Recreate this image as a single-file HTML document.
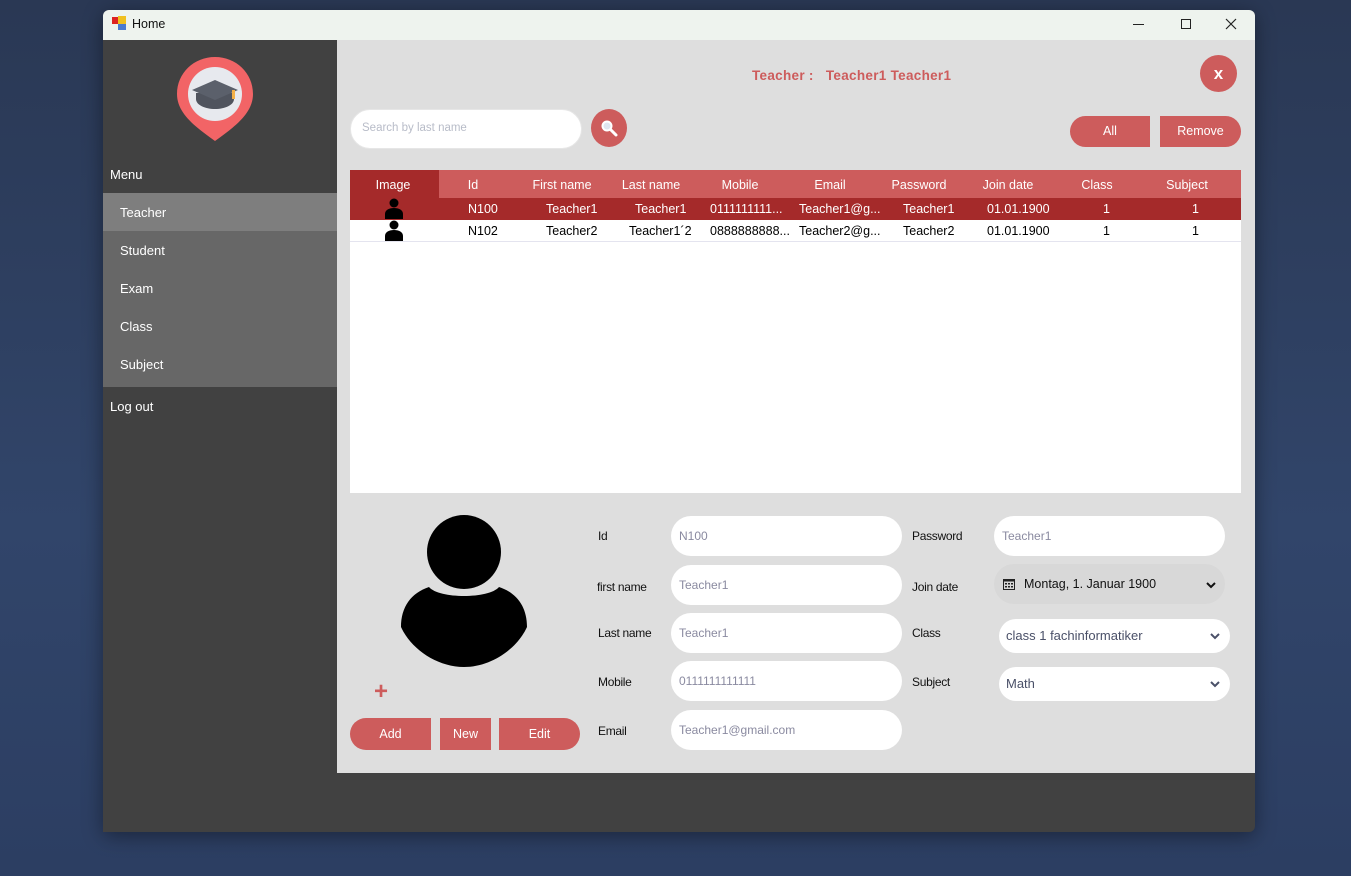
<!DOCTYPE html>
<html><head><meta charset="utf-8"><style>
*{margin:0;padding:0;box-sizing:border-box}
body{width:1351px;height:876px;background:linear-gradient(180deg,#2a3854,#31456a 60%,#2c3e62);font-family:"Liberation Sans",sans-serif;position:relative;overflow:hidden}
.a{position:absolute}
.win{left:103px;top:10px;width:1152px;height:822px;background:#414141;border-radius:6px;overflow:hidden;box-shadow:0 4px 20px rgba(0,0,0,.4)}
.t{font-size:13px;color:#fff;white-space:nowrap}
.hd{font-size:12.5px;color:#fff;top:178px;transform:translateX(-50%)}
.c{font-size:12.5px;white-space:nowrap}
.in{background:#fff;border-radius:20px;height:40px}
.lb{font-size:12px;color:#111;letter-spacing:-.3px}
.v{font-size:12px;color:#8a8aa0}
.btn{background:#cd5c5c;color:#fff;font-size:12.5px;text-align:center}
</style></head><body>
<div class="a win">
 <div class="a" style="left:0;top:0;width:1152px;height:30px;background:#eef3ee"></div>
 <div class="a" style="left:9px;top:7px;width:7px;height:7px;background:#d22"></div>
 <div class="a" style="left:15px;top:6px;width:8px;height:8px;background:#f0c020"></div>
 <div class="a" style="left:15px;top:14px;width:8px;height:6px;background:#4a7ad0"></div>
 <div class="a" style="left:29px;top:7px;font-size:12.5px;color:#111">Home</div>
 <div class="a" style="left:1030px;top:14px;width:11px;height:1px;background:#222"></div>
 <div class="a" style="left:1078px;top:9px;width:10px;height:10px;border:1px solid #222"></div>
 <svg class="a" style="left:1122px;top:8px" width="12" height="12"><path d="M1 1l10 10M11 1L1 11" stroke="#222" stroke-width="1.2"/></svg>
</div>
<!-- sidebar -->
<div class="a" style="left:103px;top:40px;width:234px;height:792px;background:#414141"></div>
<svg class="a" style="left:176px;top:56px" width="78" height="86" viewBox="0 0 78 86">
 <path d="M39 1C18 1 1 17 1 38c0 20 20 34 38 47C57 72 77 58 77 38 77 17 60 1 39 1z" fill="#f26466"/>
 <circle cx="39" cy="38" r="27" fill="#e7e9ee"/>
 <path d="M20 43v-6h38v6c0 6-9 10-19 10s-19-4-19-10z" fill="#50545e"/>
 <path d="M16 34l23-10 23 10-23 10z" fill="#5b606b"/>
 <rect x="56" y="34" width="3" height="9" fill="#f4b047"/>
</svg>
<div class="a t" style="left:110px;top:167px">Menu</div>
<div class="a" style="left:103px;top:193px;width:234px;height:194px;background:#676767"></div>
<div class="a" style="left:103px;top:193px;width:234px;height:38px;background:#7e7e7e"></div>
<div class="a t" style="left:120px;top:205px">Teacher</div>
<div class="a t" style="left:120px;top:243px">Student</div>
<div class="a t" style="left:120px;top:281px">Exam</div>
<div class="a t" style="left:120px;top:319px">Class</div>
<div class="a t" style="left:120px;top:357px">Subject</div>
<div class="a t" style="left:110px;top:399px">Log out</div>
<!-- main -->
<div class="a" style="left:337px;top:40px;width:918px;height:733px;background:#dedede"></div>
<div class="a" style="left:752px;top:68px;font-size:13.5px;font-weight:bold;color:#cd5c5c;letter-spacing:.3px">Teacher :&nbsp;&nbsp; Teacher1 Teacher1</div>
<div class="a" style="left:1200px;top:55px;width:37px;height:37px;border-radius:50%;background:#cd5c5c;color:#fff;font-weight:bold;font-size:17px;text-align:center;line-height:37px">x</div>
<div class="a in" style="left:350px;top:109px;width:232px;height:40px;border:1px solid #e6e6e6"></div>
<div class="a" style="left:362px;top:122px;font-size:11.5px;color:#b8bcc8">Search by last name</div>
<div class="a" style="left:591px;top:109px;width:36px;height:38px;border-radius:50%;background:#cd5c5c"></div>
<svg class="a" style="left:599px;top:118px" width="20" height="20"><circle cx="8" cy="8" r="5.5" fill="#fff"/><circle cx="8" cy="8" r="3.5" fill="#dfe6f0"/><path d="M12 12l5 5" stroke="#fff" stroke-width="3" stroke-linecap="round"/></svg>
<div class="a btn" style="left:1070px;top:116px;width:80px;height:31px;line-height:31px;border-radius:16px 0 0 16px">All</div>
<div class="a btn" style="left:1160px;top:116px;width:81px;height:31px;line-height:31px;border-radius:0 16px 16px 0">Remove</div>
<!-- table -->
<div class="a" style="left:350px;top:170px;width:891px;height:323px;background:#fff"></div>
<div class="a" style="left:350px;top:170px;width:891px;height:28px;background:#cd5c5c"></div>
<div class="a" style="left:350px;top:170px;width:89px;height:28px;background:#a52a2a"></div>
<div class="a" style="left:350px;top:198px;width:891px;height:22px;background:#a52a2a"></div>
<div class="a" style="left:350px;top:241px;width:891px;height:1px;background:#e4e4ef"></div>
<div class="a hd" style="left:393px">Image</div><div class="a hd" style="left:473px">Id</div><div class="a hd" style="left:562px">First name</div><div class="a hd" style="left:651px">Last name</div><div class="a hd" style="left:740px">Mobile</div><div class="a hd" style="left:830px">Email</div><div class="a hd" style="left:919px">Password</div><div class="a hd" style="left:1008px">Join date</div><div class="a hd" style="left:1097px">Class</div><div class="a hd" style="left:1187px">Subject</div>
<svg class="a" style="left:384px;top:198px" width="20" height="21"><circle cx="10" cy="5" r="4.5"/><path d="M1 21v-5c0-4 4-6 9-6s9 2 9 6v5z"/></svg>
<svg class="a" style="left:384px;top:220px" width="20" height="21"><circle cx="10" cy="5" r="4.5"/><path d="M1 21v-5c0-4 4-6 9-6s9 2 9 6v5z"/></svg>
<div class="a c" style="top:202px;left:468px;color:#fff">N100</div>
<div class="a c" style="top:202px;left:546px;color:#fff">Teacher1</div>
<div class="a c" style="top:202px;left:635px;color:#fff">Teacher1</div>
<div class="a c" style="top:202px;left:710px;color:#fff">0111111111...</div>
<div class="a c" style="top:202px;left:799px;color:#fff">Teacher1@g...</div>
<div class="a c" style="top:202px;left:903px;color:#fff">Teacher1</div>
<div class="a c" style="top:202px;left:987px;color:#fff">01.01.1900</div>
<div class="a c" style="top:202px;left:1103px;color:#fff">1</div>
<div class="a c" style="top:202px;left:1192px;color:#fff">1</div>
<div class="a c" style="top:224px;left:468px">N102</div>
<div class="a c" style="top:224px;left:546px">Teacher2</div>
<div class="a c" style="top:224px;left:629px">Teacher1´2</div>
<div class="a c" style="top:224px;left:710px">0888888888...</div>
<div class="a c" style="top:224px;left:799px">Teacher2@g...</div>
<div class="a c" style="top:224px;left:903px">Teacher2</div>
<div class="a c" style="top:224px;left:987px">01.01.1900</div>
<div class="a c" style="top:224px;left:1103px">1</div>
<div class="a c" style="top:224px;left:1192px">1</div>
<!-- avatar -->
<svg class="a" style="left:400px;top:515px" width="130" height="155"><circle cx="64" cy="37" r="37"/><path d="M1 112c0-20 10-34 28-40 10 12 60 12 70 0 18 6 28 20 28 40-10 22-36 40-63 40S11 134 1 112z"/></svg>
<div class="a" style="left:374px;top:678px;font-size:24px;color:#cd5c5c;font-weight:bold">+</div>
<div class="a btn" style="left:350px;top:718px;width:81px;height:32px;line-height:32px;border-radius:16px 0 0 16px">Add</div>
<div class="a btn" style="left:440px;top:718px;width:51px;height:32px;line-height:32px">New</div>
<div class="a btn" style="left:499px;top:718px;width:81px;height:32px;line-height:32px;border-radius:0 16px 16px 0">Edit</div>
<!-- form -->
<div class="a lb" style="left:598px;top:529px">Id</div>
<div class="a lb" style="left:597px;top:580px">first name</div>
<div class="a lb" style="left:598px;top:626px">Last name</div>
<div class="a lb" style="left:598px;top:675px">Mobile</div>
<div class="a lb" style="left:598px;top:724px">Email</div>
<div class="a in" style="left:671px;top:516px;width:231px"></div><div class="a v" style="left:679px;top:529px">N100</div>
<div class="a in" style="left:671px;top:565px;width:231px"></div><div class="a v" style="left:679px;top:578px">Teacher1</div>
<div class="a in" style="left:671px;top:613px;width:231px"></div><div class="a v" style="left:679px;top:626px">Teacher1</div>
<div class="a in" style="left:671px;top:661px;width:231px"></div><div class="a v" style="left:679px;top:674px">0111111111111</div>
<div class="a in" style="left:671px;top:710px;width:231px"></div><div class="a v" style="left:679px;top:723px">Teacher1@gmail.com</div>
<div class="a lb" style="left:912px;top:529px">Password</div>
<div class="a lb" style="left:912px;top:580px">Join date</div>
<div class="a lb" style="left:912px;top:626px">Class</div>
<div class="a lb" style="left:912px;top:675px">Subject</div>
<div class="a in" style="left:994px;top:516px;width:231px"></div><div class="a v" style="left:1002px;top:529px">Teacher1</div>
<div class="a in" style="left:994px;top:564px;width:231px;background:#d8d8d8"></div>
<svg class="a" style="left:1003px;top:578px" width="12" height="12"><rect x=".5" y="1.5" width="11" height="10" fill="none" stroke="#222"/><rect x="0" y="1" width="12" height="2.5" fill="#222"/><g fill="#222"><rect x="2" y="5" width="2" height="1.5"/><rect x="5" y="5" width="2" height="1.5"/><rect x="8" y="5" width="2" height="1.5"/><rect x="2" y="8" width="2" height="1.5"/><rect x="5" y="8" width="2" height="1.5"/><rect x="8" y="8" width="2" height="1.5"/></g></svg>
<div class="a" style="left:1024px;top:577px;font-size:12.5px;color:#111">Montag, 1. Januar 1900</div>
<svg class="a" style="left:1206px;top:581px" width="10" height="8"><path d="M1 2l4 4 4-4" fill="none" stroke="#111" stroke-width="2"/></svg>
<div class="a in" style="left:999px;top:619px;width:231px;height:34px;border-radius:17px"></div>
<div class="a" style="left:1006px;top:628px;font-size:13px;color:#4a5068">class 1 fachinformatiker</div>
<svg class="a" style="left:1210px;top:632px" width="10" height="8"><path d="M1 2l4 4 4-4" fill="none" stroke="#4a5068" stroke-width="2"/></svg>
<div class="a in" style="left:999px;top:667px;width:231px;height:34px;border-radius:17px"></div>
<div class="a" style="left:1006px;top:676px;font-size:13px;color:#4a5068">Math</div>
<svg class="a" style="left:1210px;top:680px" width="10" height="8"><path d="M1 2l4 4 4-4" fill="none" stroke="#4a5068" stroke-width="2"/></svg>
</body></html>
